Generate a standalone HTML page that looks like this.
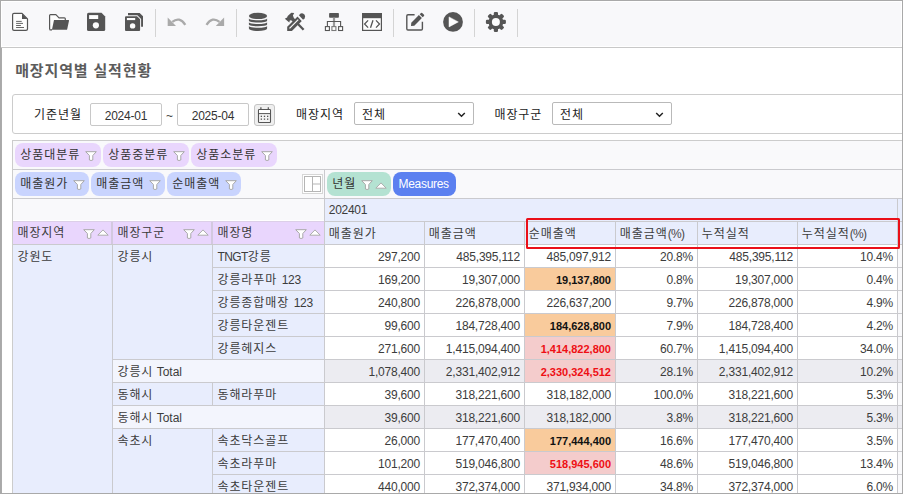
<!DOCTYPE html>
<html lang="ko">
<head>
<meta charset="utf-8">
<title>매장지역별 실적현황</title>
<style>
*{box-sizing:border-box;margin:0;padding:0}
html,body{width:903px;height:494px;overflow:hidden;background:#fff}
body{font-family:"Liberation Sans","Noto Sans CJK KR",sans-serif;font-size:12px;color:#333;position:relative}
#frame{position:absolute;left:0;top:0;width:903px;height:494px;border:1px solid #a9a9a9;z-index:50}
#lb{position:absolute;left:1px;top:48px;width:1px;height:446px;background:#ababab;z-index:49}
#toolbar{position:absolute;left:1px;top:1px;width:901px;height:46px;background:#f8f8fa;border:1px solid #fff}
#tbline{position:absolute;left:1px;top:47px;width:901px;height:1px;background:#c8c8c8}
.sep{position:absolute;top:7px;margin-left:-2px;width:1px;height:28px;background:#d4d4d4}
.ico{position:absolute;overflow:visible;margin:-2px 0 0 -2px}
#title{position:absolute;left:15.2px;top:60px;letter-spacing:.85px;font-size:15px;font-weight:bold;color:#5c5c5c;white-space:nowrap;line-height:22px}
#fpanel{position:absolute;left:12px;top:94px;width:920px;height:40px;border:1px solid #ccc;border-radius:3px;background:#fff}
.lbl{position:absolute;top:105px;line-height:20px;font-size:12px;color:#222;white-space:nowrap;letter-spacing:.95px}
.inp{position:absolute;top:103px;height:23px;border:1px solid #c8c8c8;border-radius:2px;background:#fff;font-size:12px;line-height:25px;text-align:center;color:#333;letter-spacing:-.2px}
.sel{position:absolute;top:102px;height:23px;border:1px solid #b9b9b9;border-radius:2px;background:#fff;font-size:12px;line-height:25px;color:#222;padding-left:7px;letter-spacing:.95px}
.sel .chev{position:absolute;right:7px;top:9px}
#calbtn{position:absolute;left:254px;top:104px;width:21px;height:22px;border:1px solid #c4c4c4;border-radius:3px;background:#efefef}
#calbtn svg{position:absolute;left:-1px;top:-1px}
#pivot{position:absolute;left:12px;top:140px;width:920px;height:380px;border:1px solid #ccc;background:#f9f9fb}
.chip{position:absolute;height:24px;border-radius:8px;font-size:12px;line-height:25.6px;padding-left:5.3px;white-space:nowrap;color:#333;letter-spacing:.95px}
.chip .fun{position:absolute;right:3.5px;top:7.8px}
.c-g .fun{right:17.5px}
.chip .tri{position:absolute;right:3.3px;top:9.5px}
.c-p{background:#e9d6fd}
.c-b{background:#c9d4fe}
.c-g{background:#b4e2d2}
.c-m{background:#5b80f0;color:#fff;line-height:23.5px}
#layico{position:absolute;left:302px;top:174px;width:21px;height:20px}
.hl{position:absolute;height:1px;background:#cacace}
.vl{position:absolute;width:1px;background:#cacace}
.cell{position:absolute;height:23px;line-height:25px;font-size:12px;white-space:nowrap;overflow:hidden;background:#fff;letter-spacing:.95px;color:#3c3c3c}
.pc{font-size:12px;letter-spacing:-.75px;position:relative;top:0;margin-left:0;color:#484848}
.l{letter-spacing:-.2px;position:relative;top:0;font-size:12px}
.mh .l,.ph .l{top:-1px}
.lu{letter-spacing:-.55px}
.lw{letter-spacing:0;margin-left:-1px}
.num{text-align:right;padding-right:4px;color:#3c3c3c;letter-spacing:-.2px;line-height:24px;font-size:12px}
.rh{background:#e8edfd;padding-left:4.4px;line-height:25px}
.rt{background:#f3f5fd;padding-left:4.4px;line-height:25px}
.ph{background:#e9d6fd;padding-left:4.4px}
.ph .fun{position:absolute;right:17.5px;top:8px}
.ph .tri{position:absolute;right:3px;top:8.2px}
.mh{background:#e8edfd;padding-left:3.8px}
.tot{background:#ececf1}
.org{background:#f9cb9c;font-weight:bold;color:#111;letter-spacing:0;font-size:11px}
.pink{background:#f4cccc}
.red{color:#ee0f14;font-weight:bold;letter-spacing:0;font-size:11px}
#redbox{position:absolute;left:526px;top:218px;width:374px;height:31px;border:2px solid #ea0f18;border-radius:1.5px;z-index:10}
</style>
</head>
<body>
<div id="toolbar">
<svg class="ico" style="left:0;top:0" width="540" height="46" viewBox="0 0 540 46">
<!-- new file -->
<path d="M14 13.3 H22 L27.5 19 V29 Q27.5 30.4 26 30.4 H14 Q12.6 30.4 12.6 29 V14.7 Q12.6 13.3 14 13.3 Z" fill="#fdfdfd" stroke="#555" stroke-width="1.2" stroke-linejoin="round"/>
<path d="M22 13.6 L27.3 19 H22 Z" fill="#555"/>
<path d="M16.1 21.4 H21.7 M16.1 23.4 H23 M16.1 25.5 H20.9 M16.1 27.5 H24" stroke="#555" stroke-width="0.9" fill="none"/>
<!-- folder open -->
<path d="M49.6 29.2 V15.6 Q49.6 14.7 50.5 14.7 H55.9 L59 17.8 H64.4 Q65.3 17.8 65.3 18.7 V20.4" fill="#fdfdfd" stroke="#555" stroke-width="1.2" stroke-linejoin="round"/>
<path d="M54 20.1 H68.6 Q69.2 20.1 69 20.7 L67.2 29.2 Q67 29.8 66.4 29.8 H50.2 Q49.4 29.8 52 29.6 Z" fill="#555"/>
<path d="M49.6 29.2 Q49.6 29.8 50.4 29.8 H52" fill="none" stroke="#555" stroke-width="1.2"/>
<!-- save -->
<path d="M88.6 12.8 H101.5 L105.2 16.5 V29.4 Q105.2 31 103.6 31 H88.6 Q87 31 87 29.4 V14.4 Q87 12.8 88.6 12.8 Z" fill="#555"/>
<rect x="89.1" y="15.1" width="9.1" height="3.9" fill="#fdfdfd"/>
<circle cx="95.9" cy="25.3" r="3.1" fill="#fdfdfd"/>
<!-- save all -->
<path d="M126 16.2 H137 L140.1 19.3 V30 Q140.1 31 139.1 31 H126 Q125 31 125 30 V17.2 Q125 16.2 126 16.2 Z" fill="#555"/>
<rect x="126.9" y="18" width="8.3" height="2.1" fill="#fdfdfd"/>
<circle cx="132.6" cy="25.9" r="2.7" fill="#fdfdfd"/>
<path d="M128 13 H139.7 L143 16.3 V26.7 H141.1 V18.9 L137.4 15.2 H128 Z" fill="#555"/>
<!-- undo -->
<path d="M167.7 17.6 V25.9 H176 Z" fill="#aaa"/>
<path d="M172.3 21.9 Q179.5 16 185.3 24.9" fill="none" stroke="#aaa" stroke-width="2.3"/>
<!-- redo -->
<path d="M224.1 17.6 V25.9 H215.8 Z" fill="#aaa"/>
<path d="M219.5 21.9 Q212.3 16 206.5 24.9" fill="none" stroke="#aaa" stroke-width="2.3"/>
<!-- database -->
<ellipse cx="258" cy="15.9" rx="9.1" ry="3.15" fill="#555"/>
<path d="M248.9 18.5 A9.1 1.8 0 0 0 267.1 18.5 V20.8 A9.1 1.7 0 0 1 248.9 20.8 Z" fill="#555"/>
<path d="M248.9 22.2 A9.1 1.8 0 0 0 267.1 22.2 V24.6 A9.1 1.7 0 0 1 248.9 24.6 Z" fill="#555"/>
<path d="M248.9 25.9 A9.1 1.8 0 0 0 267.1 25.9 V28.5 A9.1 2.5 0 0 1 248.9 28.5 Z" fill="#555"/>
<!-- tools -->
<path d="M296 22 L303.6 29.8" stroke="#555" stroke-width="2.3" fill="none"/>
<path d="M284.8 18.8 L287.1 17.6 L287.7 15.9 L291.3 12.8 L294.2 13.1 L292.9 15.4 L293.9 17.9 L296.2 20.2 L293.6 22.6 L291.2 20.2 L289.8 20.6 L289.3 22.4 L286.6 20.3 Z" fill="#555"/>
<path d="M287.2 31 V26.7 L297.6 16.5 L301.8 21 L291.9 31 Z" fill="#555"/>
<path d="M289.5 28.4 L298.2 19.7" stroke="#fdfdfd" stroke-width="1.2" fill="none"/>
<path d="M296.6 14.8 L303.4 21.8" stroke="#f8f8fa" stroke-width="1" fill="none"/>
<path d="M298.9 15.2 L300.6 13.6 Q303 12.5 304.6 14.8 Q305.7 16.6 304.6 18.2 L303.1 19.7 Z" fill="#555"/>
<!-- sitemap -->
<rect x="329.1" y="13" width="9.8" height="4.8" rx="0.8" fill="#555"/>
<path d="M334 17.8 V26.3" stroke="#9a9a9a" stroke-width="2.2"/>
<path d="M327.4 26.3 V21.5 H340.6 V26.3" fill="none" stroke="#555" stroke-width="1.1"/>
<rect x="325.4" y="26.6" width="4" height="3.9" fill="#fdfdfd" stroke="#555" stroke-width="1.1"/>
<rect x="331.9" y="26.6" width="4" height="3.9" fill="#fdfdfd" stroke="#7a7a7a" stroke-width="1.1"/>
<rect x="338.6" y="26.6" width="4" height="3.9" fill="#fdfdfd" stroke="#555" stroke-width="1.1"/>
<!-- code window -->
<rect x="362.6" y="13.6" width="18.8" height="16.8" fill="#fdfdfd" stroke="#555" stroke-width="1.2"/>
<rect x="362" y="13" width="20" height="5.2" fill="#555"/>
<path d="M368.1 20.4 L364.6 24 L368.1 27.6 M376 20.4 L379.5 24 L376 27.6 M373 20.2 L370.5 27.8" fill="none" stroke="#555" stroke-width="1.3"/>
<!-- edit -->
<path d="M414.6 14.8 H408 Q406.8 14.8 406.8 16 V28.8 Q406.8 30 408 30 H421.2 Q422.4 30 422.4 28.8 V21.8" fill="none" stroke="#555" stroke-width="1.4"/>
<path d="M411 25.9 L411.3 22.7 L418.9 15.1 L421.9 18.1 L414.3 25.7 Z" fill="#555"/>
<path d="M419.7 14.3 L421 13 Q421.6 12.5 422.2 13 L424 14.8 Q424.5 15.4 424 16 L422.7 17.3 Z" fill="#555"/>
<!-- play -->
<circle cx="453" cy="21.9" r="9.9" fill="#555"/>
<path d="M449 16.9 L458.3 21.9 L449 26.9 Z" fill="#fdfdfd" stroke="#fdfdfd" stroke-width="0.5" stroke-linejoin="round"/>
<!-- gear -->
<g transform="translate(495.9 21.9)" fill="#555">
<circle r="7.4"/>
<g id="t"><rect x="-2.1" y="-10" width="4.2" height="5" rx="1.2"/></g>
<rect x="-2.1" y="-10" width="4.2" height="5" rx="1.2" transform="rotate(45)"/>
<rect x="-2.1" y="-10" width="4.2" height="5" rx="1.2" transform="rotate(90)"/>
<rect x="-2.1" y="-10" width="4.2" height="5" rx="1.2" transform="rotate(135)"/>
<rect x="-2.1" y="-10" width="4.2" height="5" rx="1.2" transform="rotate(180)"/>
<rect x="-2.1" y="-10" width="4.2" height="5" rx="1.2" transform="rotate(225)"/>
<rect x="-2.1" y="-10" width="4.2" height="5" rx="1.2" transform="rotate(270)"/>
<rect x="-2.1" y="-10" width="4.2" height="5" rx="1.2" transform="rotate(315)"/>
<circle r="4" fill="#fdfdfd"/>
</g>
</svg>
<div class="sep" style="left:155px"></div>
<div class="sep" style="left:236px"></div>
<div class="sep" style="left:393px"></div>
<div class="sep" style="left:474px"></div>
<div class="sep" style="left:517px"></div>
</div>
<div id="tbline"></div>
<div id="title">매장지역별 실적현황</div>
<div id="fpanel"></div>
<div class="lbl" style="left:34px">기준년월</div>
<div class="inp" style="left:90px;width:72px">2024-01</div>
<div class="lbl" style="left:166px;color:#444;top:105.5px;letter-spacing:0">~</div>
<div class="inp" style="left:177px;width:72px">2025-04</div>
<div id="calbtn"><svg width="21" height="22" viewBox="0 0 21 22"><rect x="4.5" y="5.5" width="12" height="13" rx="0.8" fill="#f4f4f4" stroke="#555" stroke-width="1.1"/><rect x="5" y="6" width="11" height="3.2" fill="#fff"/><path d="M4.5 9.6 H16.5" stroke="#555" stroke-width="1"/><path d="M6.9 3.2 V5.5 M14.3 3.2 V5.5" stroke="#555" stroke-width="1.2"/><g fill="#555"><rect x="6.7" y="11.7" width="1.3" height="1.3"/><rect x="9.85" y="11.7" width="1.3" height="1.3"/><rect x="13" y="11.7" width="1.3" height="1.3"/><rect x="6.7" y="14.5" width="1.3" height="1.3"/><rect x="9.85" y="14.5" width="1.3" height="1.3"/><rect x="13" y="14.5" width="1.3" height="1.3"/></g></svg></div>
<div class="lbl" style="left:296px">매장지역</div>
<div class="sel" style="left:354px;width:120px">전체<svg class="chev" width="9" height="6" viewBox="0 0 9 6"><path d="M1.2 1 L4.5 4.2 L7.8 1" fill="none" stroke="#222" stroke-width="1.5"/></svg></div>
<div class="lbl" style="left:494.4px">매장구군</div>
<div class="sel" style="left:552px;width:120px">전체<svg class="chev" width="9" height="6" viewBox="0 0 9 6"><path d="M1.2 1 L4.5 4.2 L7.8 1" fill="none" stroke="#222" stroke-width="1.5"/></svg></div>
<div id="pivot"></div>
<div class="chip c-p" style="left:15px;top:143px;width:85.5px"><span>상품대분류</span><svg class="fun" width="12" height="11" viewBox="0 0 12 11"><path d="M0.7 0.7 H11.3 L7.8 4.5 V9 Q6.1 10 4.4 9 V4.5 Z" fill="#fff" stroke="#a8a8a8" stroke-width="1" stroke-linejoin="round"/></svg></div>
<div class="chip c-p" style="left:103px;top:143px;width:85.5px"><span>상품중분류</span><svg class="fun" width="12" height="11" viewBox="0 0 12 11"><path d="M0.7 0.7 H11.3 L7.8 4.5 V9 Q6.1 10 4.4 9 V4.5 Z" fill="#fff" stroke="#a8a8a8" stroke-width="1" stroke-linejoin="round"/></svg></div>
<div class="chip c-p" style="left:191px;top:143px;width:85.5px"><span>상품소분류</span><svg class="fun" width="12" height="11" viewBox="0 0 12 11"><path d="M0.7 0.7 H11.3 L7.8 4.5 V9 Q6.1 10 4.4 9 V4.5 Z" fill="#fff" stroke="#a8a8a8" stroke-width="1" stroke-linejoin="round"/></svg></div>
<div class="chip c-b" style="left:15px;top:172px;width:73.5px"><span>매출원가</span><svg class="fun" width="12" height="11" viewBox="0 0 12 11"><path d="M0.7 0.7 H11.3 L7.8 4.5 V9 Q6.1 10 4.4 9 V4.5 Z" fill="#fff" stroke="#a8a8a8" stroke-width="1" stroke-linejoin="round"/></svg></div>
<div class="chip c-b" style="left:91px;top:172px;width:73.5px"><span>매출금액</span><svg class="fun" width="12" height="11" viewBox="0 0 12 11"><path d="M0.7 0.7 H11.3 L7.8 4.5 V9 Q6.1 10 4.4 9 V4.5 Z" fill="#fff" stroke="#a8a8a8" stroke-width="1" stroke-linejoin="round"/></svg></div>
<div class="chip c-b" style="left:167px;top:172px;width:73.5px"><span>순매출액</span><svg class="fun" width="12" height="11" viewBox="0 0 12 11"><path d="M0.7 0.7 H11.3 L7.8 4.5 V9 Q6.1 10 4.4 9 V4.5 Z" fill="#fff" stroke="#a8a8a8" stroke-width="1" stroke-linejoin="round"/></svg></div>
<div id="layico"><svg width="21" height="20" viewBox="0 0 21 20"><rect x="0.5" y="0.5" width="20" height="19" fill="#fff" stroke="#d6d6d6"/><rect x="2.5" y="2.5" width="16" height="15" fill="#fff" stroke="#b5b5b5"/><path d="M10.5 2.5 V17.5 M10.5 10 H18.5" stroke="#b5b5b5" fill="none"/></svg></div>
<div class="chip c-g" style="left:327px;top:172px;width:63.5px"><span>년월</span><svg class="fun" width="12" height="11" viewBox="0 0 12 11"><path d="M0.7 0.7 H11.3 L7.8 4.5 V9 Q6.1 10 4.4 9 V4.5 Z" fill="#fff" stroke="#a8a8a8" stroke-width="1" stroke-linejoin="round"/></svg><svg class="tri" width="12" height="7" viewBox="0 0 12 7"><path d="M0.8 6.2 L6 0.9 L11.2 6.2 Z" fill="#fff" stroke="#adadad" stroke-width="1" stroke-linejoin="round"/></svg></div>
<div class="chip c-m" style="left:392.5px;top:172px;line-height:24.5px;width:63.5px;padding-left:6px"><span style="letter-spacing:-0.3px">Measures</span></div>
<div class="hl" style="left:13px;top:169px;width:890px"></div>
<div class="hl" style="left:13px;top:198px;width:890px"></div>
<div class="vl" style="left:324px;top:170px;height:330px"></div>
<div class="cell mh" style="left:325px;top:199px;width:572px;height:22px"><span class="l" style="letter-spacing:-.3px">202401</span></div>
<div class="cell mh" style="left:898px;top:199px;width:10px;height:22px"></div>
<div class="hl" style="left:325px;top:221px;width:580px"></div>
<div class="vl" style="left:897px;top:199px;height:300px"></div>
<div class="cell ph" style="left:13px;top:221px;width:99px;height:23px"><span>매장지역</span><svg class="fun" width="12" height="11" viewBox="0 0 12 11"><path d="M0.7 0.7 H11.3 L7.8 4.5 V9 Q6.1 10 4.4 9 V4.5 Z" fill="#fff" stroke="#a8a8a8" stroke-width="1" stroke-linejoin="round"/></svg><svg class="tri" width="12" height="7" viewBox="0 0 12 7"><path d="M0.8 6.2 L6 0.9 L11.2 6.2 Z" fill="#fff" stroke="#adadad" stroke-width="1" stroke-linejoin="round"/></svg></div>
<div class="cell ph" style="left:113px;top:221px;width:99px;height:23px"><span>매장구군</span><svg class="fun" width="12" height="11" viewBox="0 0 12 11"><path d="M0.7 0.7 H11.3 L7.8 4.5 V9 Q6.1 10 4.4 9 V4.5 Z" fill="#fff" stroke="#a8a8a8" stroke-width="1" stroke-linejoin="round"/></svg><svg class="tri" width="12" height="7" viewBox="0 0 12 7"><path d="M0.8 6.2 L6 0.9 L11.2 6.2 Z" fill="#fff" stroke="#adadad" stroke-width="1" stroke-linejoin="round"/></svg></div>
<div class="cell ph" style="left:213px;top:221px;width:111px;height:23px"><span>매장명</span><svg class="fun" width="12" height="11" viewBox="0 0 12 11"><path d="M0.7 0.7 H11.3 L7.8 4.5 V9 Q6.1 10 4.4 9 V4.5 Z" fill="#fff" stroke="#a8a8a8" stroke-width="1" stroke-linejoin="round"/></svg><svg class="tri" width="12" height="7" viewBox="0 0 12 7"><path d="M0.8 6.2 L6 0.9 L11.2 6.2 Z" fill="#fff" stroke="#adadad" stroke-width="1" stroke-linejoin="round"/></svg></div>
<div class="hl" style="left:13px;top:220px;width:311px;background:#fff"></div>
<div class="hl" style="left:13px;top:221px;width:311px;background:#dccfe8;z-index:2"></div>
<div class="cell mh" style="left:325px;top:222px;width:99px;height:22px">매출원가</div>
<div class="cell mh" style="left:425px;top:222px;width:99px;height:22px">매출금액</div>
<div class="cell mh" style="left:525px;top:222px;width:90px;height:22px">순매출액</div>
<div class="cell mh" style="left:616px;top:222px;width:81px;height:22px">매출금액<span class="pc">(%)</span></div>
<div class="cell mh" style="left:698px;top:222px;width:99px;height:22px">누적실적</div>
<div class="cell mh" style="left:798px;top:222px;width:99px;height:22px">누적실적<span class="pc">(%)</span></div>
<div class="cell mh" style="left:898px;top:222px;width:12px;height:22px"></div>
<div class="vl" style="left:112px;top:221px;height:280px"></div>
<div class="vl" style="left:212px;top:221px;height:280px"></div>
<div class="vl" style="left:424px;top:222px;height:280px"></div>
<div class="vl" style="left:524px;top:222px;height:280px"></div>
<div class="vl" style="left:615px;top:222px;height:280px"></div>
<div class="vl" style="left:697px;top:222px;height:280px"></div>
<div class="vl" style="left:797px;top:222px;height:280px"></div>
<div class="vl" style="left:897px;top:222px;height:280px"></div>
<div class="vl" style="left:111px;top:222px;height:22px;width:2px;background:#d3c9df"></div>
<div class="vl" style="left:211px;top:222px;height:22px;width:2px;background:#d3c9df"></div>
<div class="hl" style="left:13px;top:244px;width:890px"></div>
<div class="cell rh" style="left:13px;top:245px;width:99px;height:260px">강원도</div>
<div class="cell rh" style="left:113px;top:245px;width:99px;height:114px">강릉시</div>
<div class="hl" style="left:113px;top:359px;width:99px"></div>
<div class="cell rh" style="left:113px;top:383px;width:99px;height:22px">동해시</div>
<div class="hl" style="left:113px;top:405px;width:99px"></div>
<div class="cell rh" style="left:113px;top:429px;width:99px;height:68px">속초시</div>
<div class="hl" style="left:113px;top:497px;width:99px"></div>
<div class="cell rh" style="left:213px;top:245px;width:111px;height:22px"><span class="l lu">TNGT</span>강릉</div>
<div class="hl" style="left:213px;top:267px;width:111px"></div>
<div class="cell num" style="left:325px;top:245px;width:99px;height:22px">297,200</div>
<div class="cell num" style="left:425px;top:245px;width:99px;height:22px">485,395,112</div>
<div class="cell num" style="left:525px;top:245px;width:90px;height:22px">485,097,912</div>
<div class="cell num" style="left:616px;top:245px;width:81px;height:22px">20.8%</div>
<div class="cell num" style="left:698px;top:245px;width:99px;height:22px">485,395,112</div>
<div class="cell num" style="left:798px;top:245px;width:99px;height:22px">10.4%</div>
<div class="hl" style="left:325px;top:267px;width:580px"></div>
<div class="cell rh" style="left:213px;top:268px;width:111px;height:22px">강릉라푸마 <span class="l">123</span></div>
<div class="hl" style="left:213px;top:290px;width:111px"></div>
<div class="cell num" style="left:325px;top:268px;width:99px;height:22px">169,200</div>
<div class="cell num" style="left:425px;top:268px;width:99px;height:22px">19,307,000</div>
<div class="cell num org" style="left:525px;top:268px;width:90px;height:22px">19,137,800</div>
<div class="cell num" style="left:616px;top:268px;width:81px;height:22px">0.8%</div>
<div class="cell num" style="left:698px;top:268px;width:99px;height:22px">19,307,000</div>
<div class="cell num" style="left:798px;top:268px;width:99px;height:22px">0.4%</div>
<div class="hl" style="left:325px;top:290px;width:580px"></div>
<div class="cell rh" style="left:213px;top:291px;width:111px;height:22px">강릉종합매장 <span class="l">123</span></div>
<div class="hl" style="left:213px;top:313px;width:111px"></div>
<div class="cell num" style="left:325px;top:291px;width:99px;height:22px">240,800</div>
<div class="cell num" style="left:425px;top:291px;width:99px;height:22px">226,878,000</div>
<div class="cell num" style="left:525px;top:291px;width:90px;height:22px">226,637,200</div>
<div class="cell num" style="left:616px;top:291px;width:81px;height:22px">9.7%</div>
<div class="cell num" style="left:698px;top:291px;width:99px;height:22px">226,878,000</div>
<div class="cell num" style="left:798px;top:291px;width:99px;height:22px">4.9%</div>
<div class="hl" style="left:325px;top:313px;width:580px"></div>
<div class="cell rh" style="left:213px;top:314px;width:111px;height:22px">강릉타운젠트</div>
<div class="hl" style="left:213px;top:336px;width:111px"></div>
<div class="cell num" style="left:325px;top:314px;width:99px;height:22px">99,600</div>
<div class="cell num" style="left:425px;top:314px;width:99px;height:22px">184,728,400</div>
<div class="cell num org" style="left:525px;top:314px;width:90px;height:22px">184,628,800</div>
<div class="cell num" style="left:616px;top:314px;width:81px;height:22px">7.9%</div>
<div class="cell num" style="left:698px;top:314px;width:99px;height:22px">184,728,400</div>
<div class="cell num" style="left:798px;top:314px;width:99px;height:22px">4.2%</div>
<div class="hl" style="left:325px;top:336px;width:580px"></div>
<div class="cell rh" style="left:213px;top:337px;width:111px;height:22px">강릉헤지스</div>
<div class="hl" style="left:213px;top:359px;width:111px"></div>
<div class="cell num" style="left:325px;top:337px;width:99px;height:22px">271,600</div>
<div class="cell num" style="left:425px;top:337px;width:99px;height:22px">1,415,094,400</div>
<div class="cell num red pink" style="left:525px;top:337px;width:90px;height:22px">1,414,822,800</div>
<div class="cell num" style="left:616px;top:337px;width:81px;height:22px">60.7%</div>
<div class="cell num" style="left:698px;top:337px;width:99px;height:22px">1,415,094,400</div>
<div class="cell num" style="left:798px;top:337px;width:99px;height:22px">34.0%</div>
<div class="hl" style="left:325px;top:359px;width:580px"></div>
<div class="cell rt" style="left:113px;top:360px;width:211px;height:22px">강릉시 <span class="l lw">Total</span></div>
<div class="hl" style="left:113px;top:382px;width:211px"></div>
<div class="cell num tot" style="left:325px;top:360px;width:99px;height:22px">1,078,400</div>
<div class="cell num tot" style="left:425px;top:360px;width:99px;height:22px">2,331,402,912</div>
<div class="cell num tot red pink" style="left:525px;top:360px;width:90px;height:22px">2,330,324,512</div>
<div class="cell num tot" style="left:616px;top:360px;width:81px;height:22px">28.1%</div>
<div class="cell num tot" style="left:698px;top:360px;width:99px;height:22px">2,331,402,912</div>
<div class="cell num tot" style="left:798px;top:360px;width:99px;height:22px">10.2%</div>
<div class="cell tot" style="left:898px;top:360px;width:10px;height:22px"></div>
<div class="hl" style="left:325px;top:382px;width:580px"></div>
<div class="cell rh" style="left:213px;top:383px;width:111px;height:22px">동해라푸마</div>
<div class="hl" style="left:213px;top:405px;width:111px"></div>
<div class="cell num" style="left:325px;top:383px;width:99px;height:22px">39,600</div>
<div class="cell num" style="left:425px;top:383px;width:99px;height:22px">318,221,600</div>
<div class="cell num" style="left:525px;top:383px;width:90px;height:22px">318,182,000</div>
<div class="cell num" style="left:616px;top:383px;width:81px;height:22px">100.0%</div>
<div class="cell num" style="left:698px;top:383px;width:99px;height:22px">318,221,600</div>
<div class="cell num" style="left:798px;top:383px;width:99px;height:22px">5.3%</div>
<div class="hl" style="left:325px;top:405px;width:580px"></div>
<div class="cell rt" style="left:113px;top:406px;width:211px;height:22px">동해시 <span class="l lw">Total</span></div>
<div class="hl" style="left:113px;top:428px;width:211px"></div>
<div class="cell num tot" style="left:325px;top:406px;width:99px;height:22px">39,600</div>
<div class="cell num tot" style="left:425px;top:406px;width:99px;height:22px">318,221,600</div>
<div class="cell num tot" style="left:525px;top:406px;width:90px;height:22px">318,182,000</div>
<div class="cell num tot" style="left:616px;top:406px;width:81px;height:22px">3.8%</div>
<div class="cell num tot" style="left:698px;top:406px;width:99px;height:22px">318,221,600</div>
<div class="cell num tot" style="left:798px;top:406px;width:99px;height:22px">5.3%</div>
<div class="cell tot" style="left:898px;top:406px;width:10px;height:22px"></div>
<div class="hl" style="left:325px;top:428px;width:580px"></div>
<div class="cell rh" style="left:213px;top:429px;width:111px;height:22px">속초닥스골프</div>
<div class="hl" style="left:213px;top:451px;width:111px"></div>
<div class="cell num" style="left:325px;top:429px;width:99px;height:22px">26,000</div>
<div class="cell num" style="left:425px;top:429px;width:99px;height:22px">177,470,400</div>
<div class="cell num org" style="left:525px;top:429px;width:90px;height:22px">177,444,400</div>
<div class="cell num" style="left:616px;top:429px;width:81px;height:22px">16.6%</div>
<div class="cell num" style="left:698px;top:429px;width:99px;height:22px">177,470,400</div>
<div class="cell num" style="left:798px;top:429px;width:99px;height:22px">3.5%</div>
<div class="hl" style="left:325px;top:451px;width:580px"></div>
<div class="cell rh" style="left:213px;top:452px;width:111px;height:22px">속초라푸마</div>
<div class="hl" style="left:213px;top:474px;width:111px"></div>
<div class="cell num" style="left:325px;top:452px;width:99px;height:22px">101,200</div>
<div class="cell num" style="left:425px;top:452px;width:99px;height:22px">519,046,800</div>
<div class="cell num red pink" style="left:525px;top:452px;width:90px;height:22px">518,945,600</div>
<div class="cell num" style="left:616px;top:452px;width:81px;height:22px">48.6%</div>
<div class="cell num" style="left:698px;top:452px;width:99px;height:22px">519,046,800</div>
<div class="cell num" style="left:798px;top:452px;width:99px;height:22px">13.4%</div>
<div class="hl" style="left:325px;top:474px;width:580px"></div>
<div class="cell rh" style="left:213px;top:475px;width:111px;height:22px">속초타운젠트</div>
<div class="hl" style="left:213px;top:497px;width:111px"></div>
<div class="cell num" style="left:325px;top:475px;width:99px;height:22px">440,000</div>
<div class="cell num" style="left:425px;top:475px;width:99px;height:22px">372,374,000</div>
<div class="cell num" style="left:525px;top:475px;width:90px;height:22px">371,934,000</div>
<div class="cell num" style="left:616px;top:475px;width:81px;height:22px">34.8%</div>
<div class="cell num" style="left:698px;top:475px;width:99px;height:22px">372,374,000</div>
<div class="cell num" style="left:798px;top:475px;width:99px;height:22px">6.0%</div>
<div class="hl" style="left:325px;top:497px;width:580px"></div>
<div id="redbox"></div>
<div id="lb"></div>
<div id="frame"></div>
</body>
</html>
